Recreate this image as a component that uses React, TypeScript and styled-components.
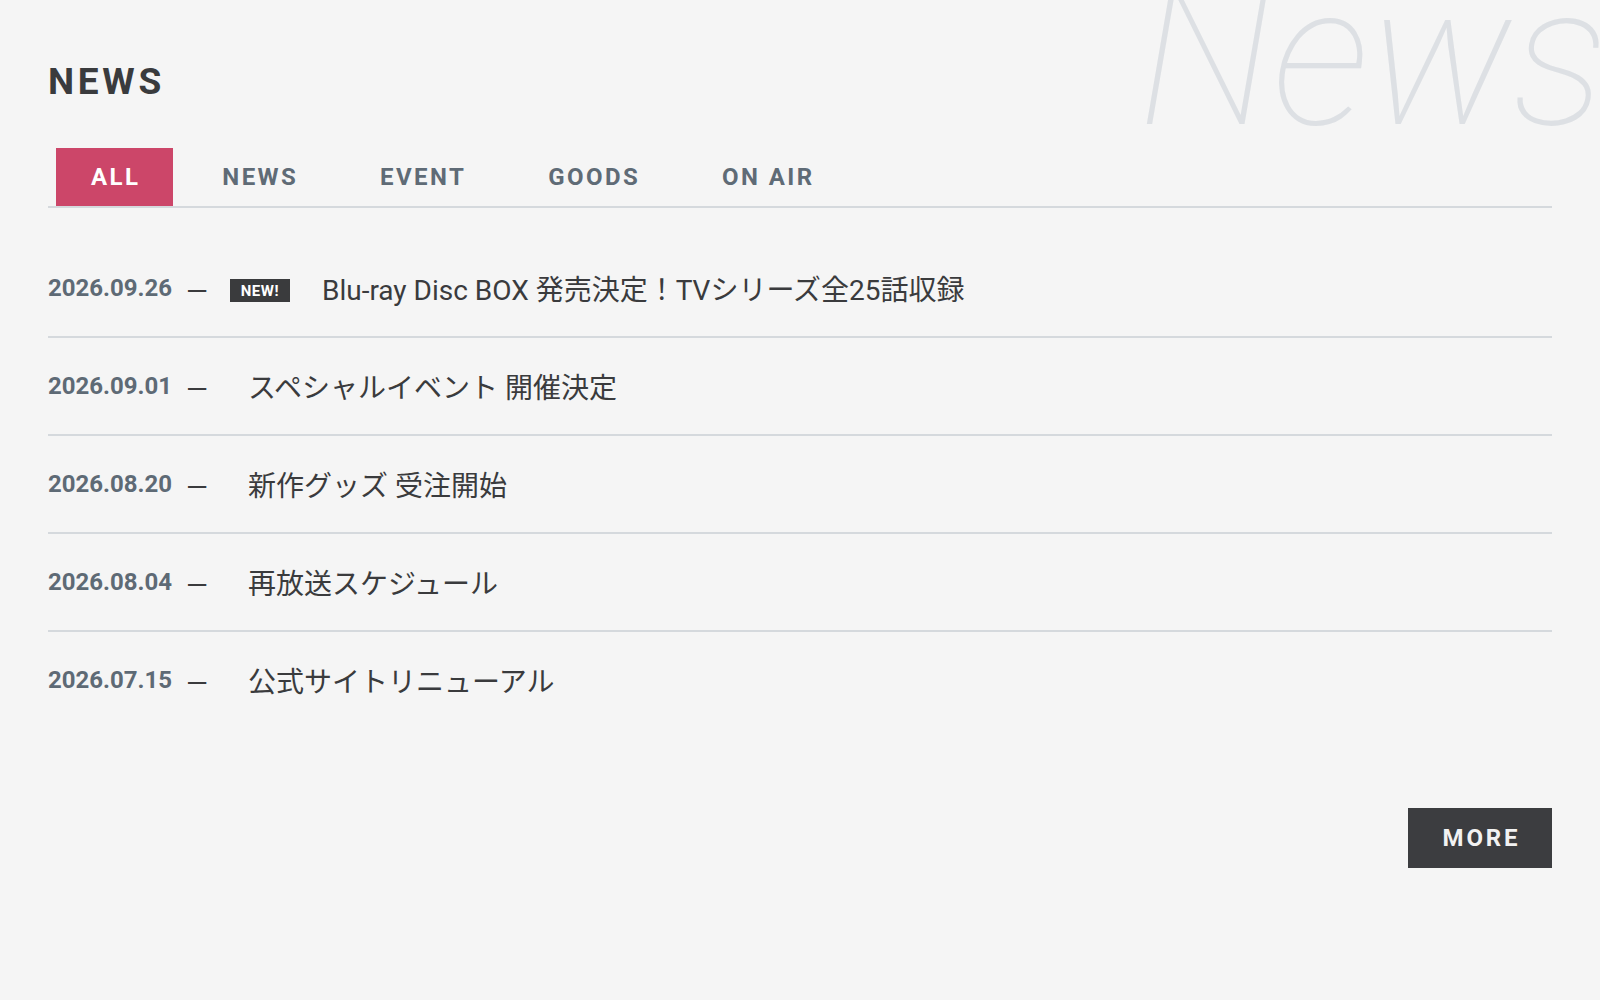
import React from "react";
import styled, { createGlobalStyle } from "styled-components";

const GlobalStyle = createGlobalStyle`
  * { box-sizing: border-box; }
  html, body { margin: 0; padding: 0; background: #f5f5f5; }
  body { font-family: "Roboto", "Noto Sans CJK JP", sans-serif; }
`;

const Page = styled.section`
  position: relative;
  min-height: 1000px;
  padding: 63px 48px 48px;
  overflow: hidden;
  background: #f5f5f5;
`;

const Watermark = styled.div`
  position: absolute;
  top: -41px;
  right: -7px;
  font-family: "Roboto", sans-serif;
  font-weight: 100;
  font-style: italic;
  font-size: 196px;
  line-height: 1;
  color: #dde0e4;
  pointer-events: none;
  user-select: none;
  white-space: nowrap;
`;

const Title = styled.h2`
  position: relative;
  margin: 0;
  font-size: 37px;
  line-height: 1;
  font-weight: 700;
  letter-spacing: 0.1em;
  color: #3a3b3d;
`;

const TabList = styled.nav`
  position: relative;
  display: flex;
  gap: 14px;
  margin-top: 48px;
  padding-left: 8px;
  border-bottom: 2px solid #d5d9dd;
`;

const Tab = styled.button<{ $active?: boolean }>`
  height: 58px;
  padding: 0 33px 0 35px;
  border: 0;
  margin: 0;
  font-family: inherit;
  font-size: 24px;
  font-weight: 700;
  letter-spacing: 0.1em;
  background: ${(p) => (p.$active ? "#cc4669" : "transparent")};
  color: ${(p) => (p.$active ? "#ffffff" : "#5f6b76")};
  cursor: pointer;
`;

const List = styled.ul`
  position: relative;
  list-style: none;
  margin: 32px 0 0;
  padding: 0;
`;

const Row = styled.li`
  display: flex;
  align-items: center;
  height: 98px;
  border-bottom: 2px solid #d5d9dd;
  &:last-child { border-bottom: 0; height: 96px; }
`;

const DateText = styled.span`
  font-size: 24px;
  font-weight: 700;
  color: #5e6a75;
`;

const Dash = styled.span`
  padding-top: 6px;
  margin-left: 14px;
  margin-right: 22px;
  font-size: 28px;
  color: #3a3b3d;
`;

const Badge = styled.span`
  display: inline-flex;
  align-items: center;
  justify-content: center;
  width: 60px;
  height: 23px;
  margin-top: 5px;
  margin-right: 32px;
  background: #3a3b3d;
  color: #ffffff;
  font-size: 15px;
  font-weight: 700;
  letter-spacing: 0.04em;
`;

const Headline = styled.span<{ $plain?: boolean }>`
  padding-left: ${(p) => (p.$plain ? "18px" : "0")};
  font-size: 28px;
  font-weight: 400;
  color: #3a3b3d;
`;

const Footer = styled.div`
  position: relative;
  display: flex;
  justify-content: flex-end;
  margin-top: 80px;
`;

const MoreButton = styled.button`
  width: 144px;
  height: 60px;
  padding: 0 0 0 3px;
  border: 0;
  background: #3c3d40;
  color: #f2f2f2;
  font-family: inherit;
  font-size: 24px;
  font-weight: 700;
  letter-spacing: 0.12em;
  cursor: pointer;
`;

const tabs = ["ALL", "NEWS", "EVENT", "GOODS", "ON AIR"];

const items = [
  { date: "2026.09.26", title: "Blu-ray Disc BOX 発売決定！TVシリーズ全25話収録", isNew: true },
  { date: "2026.09.01", title: "スペシャルイベント 開催決定" },
  { date: "2026.08.20", title: "新作グッズ 受注開始" },
  { date: "2026.08.04", title: "再放送スケジュール" },
  { date: "2026.07.15", title: "公式サイトリニューアル" },
];

export default function App() {
  return (
    <>
      <GlobalStyle />
      <Page>
        <Watermark aria-hidden="true">News</Watermark>
        <Title>NEWS</Title>
        <TabList>
          {tabs.map((t, i) => (
            <Tab key={t} $active={i === 0}>
              {t}
            </Tab>
          ))}
        </TabList>
        <List>
          {items.map((it) => (
            <Row key={it.date}>
              <DateText>{it.date}</DateText>
              <Dash>—</Dash>
              {it.isNew && <Badge>NEW!</Badge>}
              <Headline $plain={!it.isNew}>{it.title}</Headline>
            </Row>
          ))}
        </List>
        <Footer>
          <MoreButton>MORE</MoreButton>
        </Footer>
      </Page>
    </>
  );
}
